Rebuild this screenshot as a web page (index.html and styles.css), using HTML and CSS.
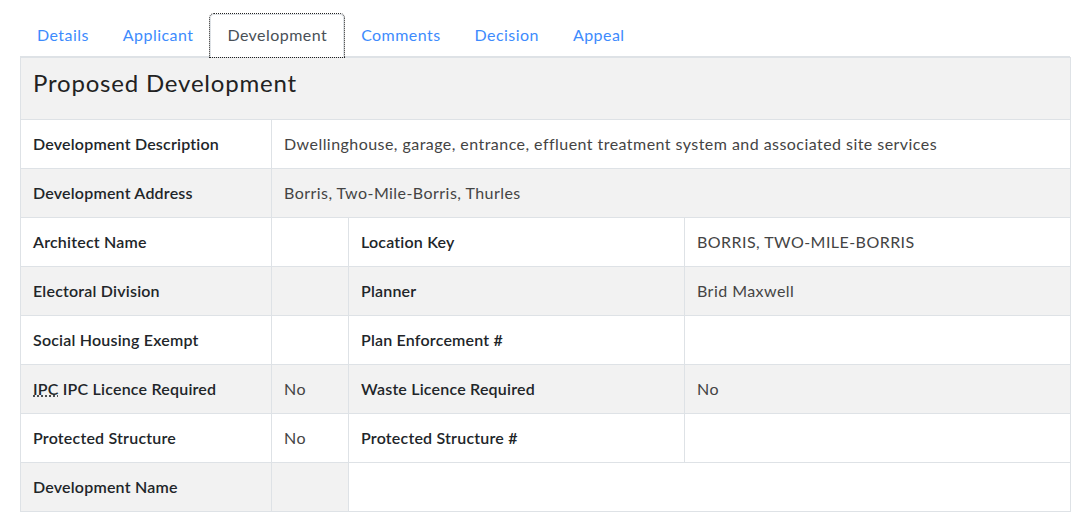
FILE: index.html
```html
<!DOCTYPE html>
<html>
<head>
<meta charset="utf-8">
<link rel="stylesheet" href="styles.css">
</head>
<body>
<div class="wrap">
  <ul class="tabs">
    <li><a class="tab" href="#">Details</a></li>
    <li><a class="tab" href="#">Applicant</a></li>
    <li><a class="tab active" href="#">Development</a></li>
    <li><a class="tab" href="#">Comments</a></li>
    <li><a class="tab" href="#">Decision</a></li>
    <li><a class="tab" href="#">Appeal</a></li>
  </ul>
  <table class="grid">
    <colgroup>
      <col class="c1"><col class="c2"><col class="c3"><col class="c4">
    </colgroup>
    <thead>
      <tr class="alt"><th colspan="4" class="title"><h3 class="heading">Proposed Development</h3></th></tr>
    </thead>
    <tbody>
      <tr><th>Development Description</th><td colspan="3">Dwellinghouse, garage, entrance, effluent treatment system and associated site services</td></tr>
      <tr class="alt"><th>Development Address</th><td colspan="3">Borris, Two-Mile-Borris, Thurles</td></tr>
      <tr><th>Architect Name</th><td></td><th>Location Key</th><td>BORRIS, TWO-MILE-BORRIS</td></tr>
      <tr class="alt"><th>Electoral Division</th><td></td><th>Planner</th><td>Brid Maxwell</td></tr>
      <tr><th>Social Housing Exempt</th><td></td><th>Plan Enforcement #</th><td></td></tr>
      <tr class="alt"><th><abbr title="Integrated Pollution Control">IPC</abbr> IPC Licence Required</th><td>No</td><th>Waste Licence Required</th><td>No</td></tr>
      <tr><th>Protected Structure</th><td>No</td><th>Protected Structure #</th><td></td></tr>
      <tr class="alt"><th>Development Name</th><td></td><td colspan="2" class="plain"></td></tr>
    </tbody>
  </table>
</div>
</body>
</html>
```
FILE: styles.css
```css
* { box-sizing: border-box; }
html, body { margin: 0; background: #fff; }
body {
  font-family: "Lato", "Open Sans", sans-serif;
  font-size: 16px;
  line-height: 24px;
  color: #333;
}
.wrap {
  padding: 14px 22px 0 20px;
}
.tabs {
  list-style: none;
  margin: 0;
  padding: 0;
  display: flex;
  border-bottom: 1px solid #dee2e6;
}
.tab {
  display: block;
  padding: 8px 16px 9px;
  border: 1px solid transparent;
  border-top-left-radius: 4px;
  border-top-right-radius: 4px;
  margin-bottom: -1px;
  color: #3d8bfd;
  text-decoration: none;
  letter-spacing: 0.45px;
}
.tab.active {
  color: #495057;
  background: #fff;
  border-color: #dee2e6 #dee2e6 #fff;
  outline: 1px dotted #222;
}
.grid {
  width: 1050px;
  border-collapse: collapse;
  border: 1px solid #dee2e6;
  table-layout: fixed;
}
.c1 { width: 251px; }
.c2 { width: 77px; }
.c3 { width: 336px; }
.c4 { width: 386px; }
.grid th, .grid td {
  border: 1px solid #dee2e6;
  padding: 12px 12px;
  text-align: left;
  vertical-align: top;
  height: 49px;
}
.grid th {
  font-weight: 600;
  color: #212529;
  letter-spacing: 0.2px;
}
.grid td {
  color: #444;
  letter-spacing: 0.45px;
}
.grid .title {
  padding: 10px 12px 12px;
  height: 62px;
}
.heading {
  margin: 0 0 10px;
  font-size: 24px;
  font-weight: 400;
  line-height: 29px;
  color: #222;
  letter-spacing: 0.8px;
}
.alt th, .alt td { background: #f2f2f2; }
.alt td.plain { background: #fff; }
abbr {
  text-decoration: underline dotted;
  cursor: help;
}
```
